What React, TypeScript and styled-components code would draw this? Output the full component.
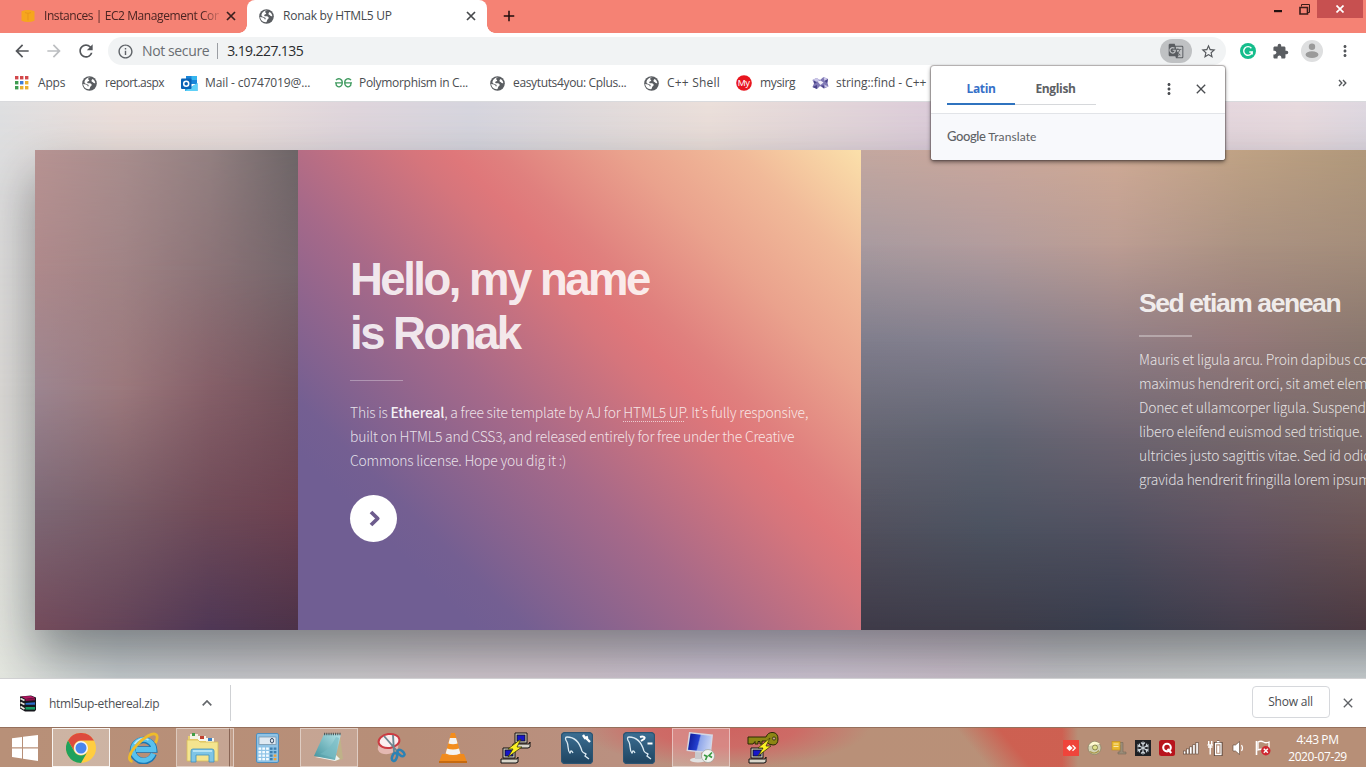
import React from "react";
import styled, { createGlobalStyle } from "styled-components";
import {
  MdAdd,
  MdArrowBack,
  MdArrowForward,
  MdClose,
  MdExtension,
  MdGTranslate,
  MdInfoOutline,
  MdMoreVert,
  MdRefresh,
  MdStarBorder,
} from "react-icons/md";

const ui = `"Open Sans", "Noto Sans", sans-serif`;
const copy = `"Noto Sans CJK KR", "Open Sans", sans-serif`;

const GlobalStyle = createGlobalStyle`
  * { box-sizing: border-box; }
  html, body { margin: 0; padding: 0; overflow: hidden; }
  h1, h2, p { margin: 0; }
  svg { display: block; flex: none; }
`;

const Screen = styled.div`
  position: relative;
  display: flex;
  flex-direction: column;
  width: 1366px;
  height: 767px;
  overflow: hidden;
  background: #fff;
  font-family: ${ui};
`;

/* ---------- Browser title bar ---------- */

const TitleBar = styled.header`
  display: flex;
  height: 33px;
  background: #f58274;
`;

const Tab = styled.div<{ $active?: boolean; $width: number; $pad: number }>`
  position: relative;
  display: flex;
  align-items: center;
  width: ${(p) => p.$width}px;
  height: 33px;
  padding: 0 10px 1px ${(p) => p.$pad}px;
  background: ${(p) => (p.$active ? "#fff" : "transparent")};
  border-radius: 8px 8px 0 0;
  ${(p) =>
    p.$active &&
    `
    &::before, &::after {
      content: "";
      position: absolute;
      bottom: 0;
      width: 8px;
      height: 8px;
    }
    &::before { left: -8px; background: radial-gradient(circle at 0 0, transparent 7.5px, #fff 8px); }
    &::after { right: -8px; background: radial-gradient(circle at 100% 0, transparent 7.5px, #fff 8px); }
  `}
`;

const TabTitle = styled.span<{ $fade?: boolean; $spacing: number }>`
  flex: 1;
  margin: 0 6px 0 ${(p) => (p.$fade ? 8 : 9)}px;
  overflow: hidden;
  white-space: nowrap;
  font-size: 12px;
  line-height: 18px;
  letter-spacing: ${(p) => p.$spacing}px;
  color: ${(p) => (p.$fade ? "#4a2422" : "#45494d")};
  ${(p) => p.$fade && "mask-image: linear-gradient(90deg, #000 90%, transparent 102%);"}
`;

const NewTab = styled.div`
  display: flex;
  align-items: center;
  padding: 0 0 1px 13px;
`;

const WindowButtons = styled.div`
  display: flex;
  margin-left: auto;
  padding-right: 3px;
`;

const WindowButton = styled.div<{ $width: number; $close?: boolean }>`
  display: flex;
  align-items: center;
  justify-content: center;
  width: ${(p) => p.$width}px;
  height: 18px;
  background: ${(p) => (p.$close ? "#c75050" : "transparent")};
`;

/* ---------- Toolbar ---------- */

const Toolbar = styled.div`
  display: flex;
  align-items: center;
  height: 35px;
  padding: 1px 12px 0 12px;
`;

const NavIcon = styled.span`
  display: flex;
  width: 32px;
`;

const AddressBar = styled.div`
  display: flex;
  align-items: center;
  width: 1118px;
  height: 28px;
  padding: 0 9px 0 9px;
  border-radius: 14px;
  background: #f1f3f4;
`;

const AddressText = styled.span<{ $muted?: boolean; $spacing: number }>`
  font-size: 14px;
  line-height: 20px;
  letter-spacing: ${(p) => p.$spacing}px;
  color: ${(p) => (p.$muted ? "#6a6e73" : "#292b2e")};
  margin-left: ${(p) => (p.$muted ? 8 : 9)}px;
`;

const AddressDivider = styled.i`
  width: 1px;
  height: 16px;
  margin-left: 8px;
  background: #9b9ea3;
`;

const TranslatePill = styled.span`
  display: flex;
  align-items: center;
  justify-content: center;
  width: 32px;
  height: 24px;
  margin-left: auto;
  margin-right: 8px;
  border-radius: 12px;
  background: #bfc1c3;
`;

const ToolbarIcons = styled.div`
  display: flex;
  align-items: center;
  margin-left: 14px;
  gap: 12.5px;

  > :first-child {
    margin-right: 3px;
  }
`;

/* ---------- Bookmarks ---------- */

const Bookmarks = styled.nav`
  display: flex;
  align-items: center;
  height: 34px;
  padding: 0 14px 3px 14px;
  border-bottom: 1px solid #d9dadd;
`;

const Bookmark = styled.span<{ $width: number; $gap: number; $spacing: number }>`
  display: flex;
  align-items: center;
  gap: ${(p) => p.$gap}px;
  flex: none;
  width: ${(p) => p.$width}px;
  font-size: 12px;
  line-height: 18px;
  letter-spacing: ${(p) => p.$spacing}px;
  color: #4a4d51;
  white-space: nowrap;
`;

const Overflow = styled.span`
  margin-left: auto;
  margin-right: 5px;
`;

/* ---------- Translate popup ---------- */

const Popup = styled.aside`
  position: absolute;
  left: 931px;
  top: 66px;
  z-index: 5;
  width: 294px;
  height: 94px;
  border-radius: 3px;
  overflow: hidden;
  background: #fff;
  box-shadow: 0 0 1px 1px rgba(70, 60, 60, 0.38), 0 2px 4px rgba(0, 0, 0, 0.5);
`;

const PopupTop = styled.div`
  display: flex;
  height: 48px;
  padding: 0 16px;
  border-bottom: 1px solid #e2e4e8;
`;

const Lang = styled.span<{ $active?: boolean; $width: number }>`
  width: ${(p) => p.$width}px;
  height: 39px;
  padding-top: 14px;
  text-align: center;
  font-size: 12px;
  font-weight: 700;
  line-height: 18px;
  letter-spacing: -0.35px;
  color: ${(p) => (p.$active ? "#3670c8" : "#5d6064")};
  border-bottom: ${(p) => (p.$active ? "2px solid #2f73bf" : "1px solid #d6d8db")};
`;

const PopupActions = styled.span`
  display: flex;
  align-items: center;
  gap: 15px;
  margin-left: auto;
  padding-bottom: 2px;
`;

const PopupFooter = styled.div`
  height: 46px;
  padding: 13px 16px;
  background: #f8f9fc;
  font-family: Lato, ${ui};
  font-size: 12px;
  line-height: 18px;
  color: #5f6266;
  letter-spacing: 0.1px;
`;

const GoogleWord = styled.span`
  font-size: 13px;
  font-weight: 500;
  letter-spacing: -0.4px;
`;

/* ---------- Soft colour meshes ---------- */

const MeshStack = styled.div`
  display: grid;
  grid-area: 1 / 1;
  isolation: isolate;
  overflow: hidden;
`;

const MeshLayer = styled.i<{ $colors: string[]; $from: number; $to: number }>`
  grid-area: 1 / 1;
  background: linear-gradient(90deg, ${(p) => p.$colors.join(", ")});
  ${(p) =>
    p.$to > 0 &&
    `mask-image: linear-gradient(180deg, transparent ${p.$from}%, #000 ${p.$to}%);`}
`;

function Mesh({ rows }: { rows: string[][] }) {
  const step = 100 / (rows.length - 1);
  return (
    <MeshStack>
      {rows.map((colors, i) => (
        <MeshLayer key={i} $colors={colors} $from={(i - 1) * step} $to={i * step} />
      ))}
    </MeshStack>
  );
}

const pageMesh = [
  ["#dedfe1", "#ebdeda", "#e9dddb", "#dfd5dc", "#d6d5de", "#e0dadb", "#ebdfda", "#e3d6d9", "#dbcbd9", "#dccfdb", "#e4d5dd", "#e8dade", "#d6d5e1", "#d3d4e2"],
  ["#dddbd8", "#dedcda", "#dad8d8", "#d8d6d8", "#d6d6dc", "#d8d6da", "#dcd6d6", "#d8d0d6", "#d4ccd6", "#d2ccd6", "#d4d0d8", "#d4d0d8", "#d0d0d8", "#d0d2da"],
  ["#e3e6df", "#c8ced1", "#cbcbcf", "#cfcccf", "#d2c8cf", "#d2c6d0", "#cfc5d6", "#d0c6d4", "#cec2ce", "#c6c6ca", "#c8cacb", "#cbd0d2", "#cbd1d3", "#ced4d5"],
];

const leftMesh = [
  ["#b79392", "#a88d8d", "#938081", "#6d6567"],
  ["#ae898b", "#a08385", "#8b7377", "#74656a"],
  ["#9c8590", "#9b787c", "#855f68", "#70505a"],
  ["#7d6875", "#795c67", "#704b58", "#6c4150"],
  ["#744b5b", "#634358", "#4f3755", "#4c3248"],
];

const rightMesh = [
  ["#c4a8a0", "#caa79c", "#cfaa95", "#bfa284", "#b0987b"],
  ["#a89a9f", "#b29c9d", "#bc9d93", "#ab9282", "#a48d7a"],
  ["#7f7d8c", "#837f8e", "#917f87", "#94797a", "#89776e"],
  ["#646572", "#5f6371", "#6c6471", "#75676b", "#7b6b6a"],
  ["#504f5c", "#4b515f", "#4f4f5f", "#60505f", "#695253"],
  ["#3e3a48", "#3d3b48", "#373c4c", "#433d4b", "#4b3840"],
];

/* ---------- Web page ---------- */

const Page = styled.main`
  display: grid;
  height: 577px;
  overflow: hidden;
  border-bottom: 1px solid #d0d0d2;
`;

const PageContent = styled.div`
  grid-area: 1 / 1;
  z-index: 1;
  padding: 48px 0 0 35px;
`;

const Strip = styled.section`
  display: flex;
  width: 1500px;
  height: 480px;
  box-shadow: 0 24px 48px rgba(8, 14, 20, 0.42);
`;

const Panel = styled.article<{ $width: number }>`
  display: grid;
  flex: none;
  width: ${(p) => p.$width}px;
  height: 480px;
  overflow: hidden;
`;

const IntroPanel = styled(Panel)`
  background: linear-gradient(
    45deg,
    #705e93 0%,
    #705e93 17%,
    #745f92 22%,
    #a66989 41%,
    #d5757c 56.5%,
    #df777a 60.5%,
    #e0807e 65%,
    #eaa28d 77%,
    #f1ba99 88%,
    #fbe0aa 100%
  );
`;

const PanelBody = styled.div<{ $top: number; $left: number }>`
  grid-area: 1 / 1;
  z-index: 1;
  padding: ${(p) => p.$top}px 0 0 ${(p) => p.$left}px;
`;

const Title = styled.h1`
  font-family: "Liberation Sans", Arial, sans-serif;
  font-size: 45.5px;
  line-height: 54px;
  letter-spacing: -2.5px;
  color: rgba(255, 255, 255, 0.87);
`;

const SubTitle = styled.h2`
  font-family: "Liberation Sans", Arial, sans-serif;
  font-size: 26.5px;
  line-height: 32px;
  letter-spacing: -1.42px;
  white-space: nowrap;
  color: rgba(255, 255, 255, 0.87);
`;

const Rule = styled.div<{ $thick: number; $before: number; $after: number }>`
  width: 53px;
  height: ${(p) => p.$thick}px;
  margin: ${(p) => p.$before}px 0 ${(p) => p.$after}px;
  background: rgba(255, 255, 255, 0.32);
`;

const Copy = styled.p`
  font-family: ${copy};
  font-size: 13.9px;
  font-weight: 300;
  line-height: 24px;
  letter-spacing: -0.2px;
  white-space: nowrap;
  color: rgba(255, 255, 255, 0.82);

  b {
    font-weight: 500;
    color: rgba(255, 255, 255, 0.92);
  }
`;

const DottedLink = styled.a`
  background: linear-gradient(90deg, rgba(255, 255, 255, 0.65) 50%, transparent 50%) 0 100% / 2px 1px repeat-x;
`;

const RoundButton = styled.div`
  display: flex;
  align-items: center;
  justify-content: center;
  width: 47px;
  height: 47px;
  margin-top: 23px;
  padding-left: 3px;
  border-radius: 50%;
  background: #fff;
`;

/* ---------- Downloads shelf ---------- */

const Shelf = styled.div`
  display: flex;
  align-items: center;
  height: 48px;
  padding: 0 10px 0 19px;
  background: #fff;
`;

const ShelfItem = styled.div`
  display: flex;
  align-items: center;
  width: 212px;
  height: 36px;
  border-right: 1px solid #cfd1d4;
`;

const FileName = styled.span`
  width: 153px;
  margin-left: 12px;
  padding-top: 2px;
  font-size: 12px;
  line-height: 18px;
  letter-spacing: -0.33px;
  color: #4d5054;
`;

const ShowAll = styled.div`
  width: 78px;
  height: 32px;
  margin: -2px 10px 0 auto;
  padding-right: 1px;
  border: 1px solid #d6d8dc;
  border-radius: 4px;
  text-align: center;
  font-size: 12px;
  font-weight: 500;
  line-height: 30px;
  letter-spacing: -0.2px;
  color: #4a4d51;
`;

/* ---------- Taskbar ---------- */

const Taskbar = styled.footer`
  display: flex;
  height: 40px;
  border-top: 1px solid #95705c;
  background:
    radial-gradient(ellipse 145px 42px at 725px -2px, rgba(207, 96, 94, 0.95) 0%, rgba(209, 100, 98, 0.85) 50%, rgba(209, 98, 98, 0) 100%),
    linear-gradient(90deg, transparent 1062px, #b78f77 1078px),
    linear-gradient(50deg, transparent 757px, rgba(207, 92, 78, 0.92) 790px),
    linear-gradient(90deg, #b89078 0%, #b78e78 30%, #ba9080 45%, #b99078 62%, #b89178 100%);
`;

const TaskItems = styled.div`
  display: flex;
  gap: 4px;
`;

const StartButton = styled.div`
  display: flex;
  align-items: center;
  justify-content: center;
  width: 48px;
  height: 39px;
`;

const TaskItem = styled.div<{ $state?: "active" | "open" | "stacked" }>`
  display: flex;
  align-items: center;
  justify-content: center;
  width: 58px;
  height: 39px;
  padding-right: ${(p) => (p.$state === "stacked" ? 5 : 0)}px;
  border: 1px solid
    ${(p) =>
      p.$state === "active" ? "rgba(255,255,255,.85)" : p.$state ? "rgba(255,255,255,.45)" : "transparent"};
  background: ${(p) =>
    p.$state === "active"
      ? "rgba(225,215,205,.5)"
      : p.$state === "stacked"
        ? "linear-gradient(90deg, rgba(255,255,255,.2) 52px, rgba(90,60,50,.5) 52px, rgba(90,60,50,.5) 53px, rgba(255,255,255,.35) 53px, rgba(255,255,255,.12) 54px)"
        : p.$state
          ? "rgba(255,255,255,.2)"
          : "none"};
`;

const Tray = styled.div`
  display: flex;
  align-items: center;
  gap: 8px;
  margin-left: auto;
  padding: 1px 18px 0 0;
`;

const Clock = styled.div`
  width: 61px;
  margin: -1px 0 0 8px;
  text-align: center;
  font-size: 12px;
  line-height: 17px;
  letter-spacing: -0.4px;
  color: #fff;
  white-space: nowrap;
`;

/* ---------- Icons ---------- */

const GlobeIcon = () => (
  <svg width="15" height="15" viewBox="0 0 15 15">
    <circle cx="7.500" cy="7.500" r="7.300" fill="#5a5d61" />
    <path
      d="M8.600 1.500c-1.500.2-2.700.8-2.400 1.800.2.700 1 .5 1 1.300 0 1-1.500.7-1.900 1.400-.4.800.4 1.300 1.400 1.300 1.500 0 2.800.2 3 1.500.1 1.300-1.200 1.500-1.600 2.500-.3.900-.2 1.900-1.200 1.900-3.500-.1-5.600-2.600-5.700-5.500 1.300.7 2.500.6 3.400 1.100 1 .6 1.200 1.300 1.400 2 .5-.5.800-1 .5-1.700-.3-.7-1.200-.7-2-1.100-1.200-.6-2.400-1.100-2-2.600C3 3.300 5.500 1 8.600 1.500z"
      fill="#fff"
    />
    <path d="M10.600 3c1.600.9 2.600 2.400 2.700 4.200-1 .3-1.700-.1-2.200-.6-.7-.8-1.800-.9-1.600-2.100.1-.6.500-1.200 1.100-1.500z" fill="#fff" />
  </svg>
);

const Ec2Icon = () => (
  <svg width="16" height="16" viewBox="0 0 16 16">
    <path d="M1.500 3.200Q8 .8 14.500 3.200v9.600Q8 15.200 1.500 12.800z" fill="#f6a61d" />
    <path d="M5 4.600l3 .8 3-.8M8 5.400v7" stroke="#e9951b" fill="none" />
  </svg>
);

const AppsIcon = () => {
  const colors = ["#d2484b", "#d2484b", "#d2484b", "#3e9c50", "#3c7dd9", "#e9b030", "#3e9c50", "#e9b030", "#e9b030"];
  return (
    <svg width="15" height="14" viewBox="0 0 15 14">
      {colors.map((c, i) => (
        <rect key={i} x={1 + (i % 3) * 5} y={Math.floor(i / 3) * 5} width="3.400" height="3.400" fill={c} />
      ))}
    </svg>
  );
};

const OutlookIcon = () => (
  <svg width="17" height="17" viewBox="0 0 17 17">
    <path d="M5 1h11v8H5z" fill="#1a86d9" />
    <path d="M10.500 1H16v4h-5.500z" fill="#35b5ee" />
    <path d="M4 8l6 4 6.500-4v8H4z" fill="#28a8ea" />
    <path d="M4 16l12.500-8v8z" fill="#5fd0f7" />
    <rect x="0" y="3.500" width="10.500" height="10.500" rx="1" fill="#0a63b5" />
    <circle cx="5.200" cy="8.700" r="2.500" fill="none" stroke="#fff" strokeWidth="1.500" />
  </svg>
);

const GeeksIcon = () => (
  <svg width="17" height="10" viewBox="0 0 17 10" fill="none" stroke="#3f9a5f" strokeWidth="1.300">
    <path d="M1 2.200C3-.4 7.300.6 7.300 4.800S3 10 1.200 7.200V4.900M0 4.900h7.300" />
    <path d="M16 2.200C14-.4 9.700.6 9.700 4.800S14 10 15.800 7.200V4.900M9.700 4.900H17" />
  </svg>
);

const MyIcon = () => (
  <svg width="16" height="16" viewBox="0 0 16 16">
    <circle cx="8" cy="8" r="7.800" fill="#e8161f" />
    <text x="7.800" y="11" textAnchor="middle" fontSize="9.500" letterSpacing="-.3" fill="#fff" fontFamily="Liberation Sans, sans-serif">
      My
    </text>
  </svg>
);

const CppIcon = () => (
  <svg width="17" height="14" viewBox="0 0 17 14">
    <path d="M.5 4l4-2 3.500 2 3.500-3 4.500 2-.5 4 1 3.500-4.500 2-4-2.500-3 3L.5 11 2 7.500z" fill="#8079b5" />
    <path d="M.5 4l4-2 3.500 2-3 1.800zM11.500 1L16 3l-3.500 2zM12 8.500l4.500 2-4 1z" fill="#cbc7e8" />
    <path d="M5.500 5.500l3-1 3 2-3 2.500z" fill="#f1effa" />
    <path d="M.5 11l4.500-2v4zM9 9.500l3 3 .5-3zM12.500 5l2.500 2 1-4zM2 7.500l3-.5-3-2.500z" fill="#4b448b" />
  </svg>
);

const GrammarlyIcon = () => (
  <svg width="16" height="16" viewBox="0 0 16 16">
    <circle cx="8" cy="8" r="8" fill="#15bd8c" />
    <path d="M11.400 5.300A4.300 4.300 0 1 0 12.200 9H9.300M12.200 9v2.600" fill="none" stroke="#fff" strokeWidth="1.400" />
  </svg>
);

const AvatarIcon = () => (
  <svg width="22" height="22" viewBox="0 0 22 22">
    <circle cx="11" cy="11" r="11" fill="#dedfe0" />
    <circle cx="11" cy="6.700" r="3.200" fill="#9a9a9a" />
    <ellipse cx="11" cy="14.700" rx="6.400" ry="3.400" fill="#9a9a9a" />
  </svg>
);

const MinimizeIcon = () => (
  <svg width="8" height="18" viewBox="0 0 8 18">
    <rect y="10" width="8" height="2.200" fill="#221110" />
  </svg>
);

const RestoreIcon = () => (
  <svg width="11" height="11" viewBox="0 0 11 11" fill="none" stroke="#3a1c19">
    <path d="M2.500 2.500V.5h8v8h-2" />
    <path d="M1 3.500h7.500V10H1z" strokeWidth="1.600" />
  </svg>
);

const CloseWindowIcon = () => (
  <svg width="8" height="8" viewBox="0 0 8 8" stroke="#fff" strokeWidth="1.700">
    <path d="M.5.5l7 7M7.500.5l-7 7" />
  </svg>
);

const TabCloseIcon = ({ color }: { color: string }) => (
  <svg width="12" height="12" viewBox="0 0 12 12" stroke={color} strokeWidth="1.700">
    <path d="M2 2l8 8M10 2l-8 8" />
  </svg>
);

const ChevronsIcon = () => (
  <svg width="9" height="8" viewBox="0 0 9 8" fill="none" stroke="#55585c" strokeWidth="1.400">
    <path d="M1 1l2.800 3L1 7M5 1l2.800 3L5 7" />
  </svg>
);

const NextIcon = () => (
  <svg width="12" height="17" viewBox="0 0 12 17" fill="none" stroke="#6d5c8d" strokeWidth="3.800" strokeLinejoin="round">
    <path d="M2 2l6.700 6.500L2 15" />
  </svg>
);

const RarIcon = () => (
  <svg width="18" height="17" viewBox="0 0 18 17">
    <path d="M1 1.500L12 .5l5 2V15l-1.500 1.500H6l-5-3z" fill="#16161c" />
    <path d="M2 1.500L12 1l4 1.800L6.500 4z" fill="#b21761" />
    <path d="M6.500 4L16 3v2.200l-9.500.8z" fill="#8a0f4a" />
    <path d="M6.500 8L16 7.200v2.600H6.500z" fill="#2a6cc8" />
    <path d="M6.500 12H16v2.600H6.500z" fill="#179b62" />
    <path d="M1.500 3.500l4 2M1.500 7.500l4 2M1.500 11.500l4 2.500" stroke="#e7e5dc" strokeWidth="1.800" />
  </svg>
);

const ShelfCaret = () => (
  <svg width="10" height="6" viewBox="0 0 10 6" fill="none" stroke="#63666a" strokeWidth="1.700">
    <path d="M.7 5.300L5 1l4.300 4.300" />
  </svg>
);

const WindowsIcon = () => (
  <svg width="28" height="26" viewBox="0 0 28 26" fill="#fff">
    <path d="M2 3.300l10-1.300v10.300H2zM13 1.800L28.500 0v12.300H13zM2 13.400h10v10L2 22zM13 13.400h15.500V26L13 23.800z" />
  </svg>
);

const ChromeIcon = () => (
  <svg width="30" height="30" viewBox="0 0 30 30">
    <circle cx="15" cy="15" r="15" fill="#ffcd40" />
    <path d="M2 7.500A15 15 0 0 1 28 7.500H15a7.500 7.500 0 0 0-6.500 11z" fill="#dd4b3e" />
    <path d="M2 7.500A15 15 0 0 0 15 30l6.500-11.200a7.500 7.500 0 0 1-13 0z" fill="#1fa15d" />
    <circle cx="15" cy="15" r="7" fill="#f4f4f4" />
    <circle cx="15" cy="15" r="5.500" fill="#4a86ee" />
  </svg>
);

const IeIcon = () => (
  <svg width="32" height="32" viewBox="0 0 32 32" fill="none">
    <path d="M26.500 22A10.500 10.500 0 1 1 27 17.500H9" stroke="#1a76b2" strokeWidth="6.600" />
    <path d="M26.300 21.700A10.500 10.500 0 1 1 27 17.500H9" stroke="#58c1ee" strokeWidth="4.800" />
    <path d="M7.500 12c3-5 9-7 14-4" stroke="#bfe9fa" strokeWidth="1.500" />
    <path d="M5.500 29.500c-5.500-.5-3-9 3.500-15.500C17 5 26.500-.5 29.500 3c1.500 2 .5 5-1 8" stroke="#eebb2b" strokeWidth="2.800" />
  </svg>
);

const FolderIcon = () => (
  <svg width="34" height="31" viewBox="0 0 34 31">
    <path d="M2 4h9l2 2h8v20H2z" fill="#e9cf6e" />
    <rect x="4" y="2" width="8" height="5" fill="#f3f3e4" />
    <rect x="6" y="1" width="3" height="3" fill="#3f9e45" />
    <rect x="12" y="4" width="8" height="5" fill="#f7f7ef" />
    <rect x="14" y="4" width="4" height="3" fill="#c2402e" />
    <rect x="20" y="6" width="8" height="5" fill="#f7f7ef" />
    <rect x="22" y="6" width="4" height="3" fill="#3d7fc4" />
    <path d="M1 8h11l2 2h18v19H1z" fill="#f4e48f" stroke="#d8bd58" strokeWidth=".8" />
    <path d="M5 30V19q0-2 2-2h19q2 0 2 2v11h-5v-7H10v7z" fill="#7ec5e6" stroke="#3f91bd" strokeWidth=".8" />
    <path d="M7 19h19" stroke="#c9ecf9" strokeWidth="1.500" />
  </svg>
);

const CalcIcon = () => (
  <svg width="23" height="30" viewBox="0 0 23 30">
    <rect x=".5" y=".5" width="22" height="29" rx="1.500" fill="#8fc3e6" stroke="#4f8fbe" />
    <rect x="3" y="4" width="17" height="7.500" fill="#dfe9f2" stroke="#6e8ca3" strokeWidth=".7" />
    <ellipse cx="16" cy="7.700" rx="1.600" ry="2.300" fill="none" stroke="#364a63" />
    {[0, 1, 2, 3].map((r) =>
      [0, 1, 2, 3, 4].map((c) => (
        <rect
          key={`${r}-${c}`}
          x={2.500 + c * 3.800}
          y={14.500 + r * 3.500}
          width="2.700"
          height="2.300"
          fill={c === 4 && r > 1 ? "#eda13a" : c > 2 ? "#3e7fae" : "#f3fbff"}
        />
      )),
    )}
  </svg>
);

const NotepadIcon = () => (
  <svg width="30" height="31" viewBox="0 0 30 31">
    <defs>
      <linearGradient id="pad" x1="0" y1="1" x2="1" y2="0">
        <stop offset="0" stopColor="#3f919c" />
        <stop offset="1" stopColor="#b6e4e8" />
      </linearGradient>
    </defs>
    <path d="M26 3l3 24-7 2z" fill="#bfb289" />
    <path d="M1 25l20 4 5-2-4-4z" fill="#eef2ee" />
    <path d="M10 2h17l-6 26L0 24z" fill="url(#pad)" />
    <path d="M10 2h17" stroke="#4f5a5c" strokeWidth="2.500" strokeDasharray="1.200 1" />
    <path d="M6 22c8-4 12-9 16-17l3 1-4 20z" fill="#76bac3" opacity=".6" />
  </svg>
);

const SnipIcon = () => (
  <svg width="31" height="31" viewBox="0 0 31 31" fill="none">
    <ellipse cx="12" cy="15" rx="10.500" ry="7" fill="#e4b8b2" transform="rotate(-12 12 15)" />
    <ellipse cx="13" cy="9" rx="10.500" ry="7" fill="#fbeff0" stroke="#cc3b42" strokeWidth="2" transform="rotate(-8 13 9)" />
    <path d="M8 4l13 15M17 3l1 17" stroke="#6d8791" strokeWidth="1.900" />
    <ellipse cx="18.500" cy="25" rx="2.300" ry="4" stroke="#2c82b4" strokeWidth="2.500" transform="rotate(20 18.500 25)" />
    <ellipse cx="25" cy="21" rx="2.300" ry="4" stroke="#2c82b4" strokeWidth="2.500" transform="rotate(-50 25 21)" />
  </svg>
);

const VlcIcon = () => (
  <svg width="28" height="31" viewBox="0 0 28 31">
    <path d="M3 22h22l3 8H0z" fill="#f08a1c" />
    <path d="M0 29h28v2H0z" fill="#c66a10" />
    <path d="M12 1h4l6 22q-8 4-16 0z" fill="#f38d1d" />
    <path d="M10.900 6h6.200l1.500 5.500q-4.600 1.500-9.200 0zM8 16.500q6 2 12 0l1.400 5q-7.400 3-14.800 0z" fill="#f4f3f1" />
  </svg>
);

const computer = (x: number, y: number) => (
  <g transform={`translate(${x} ${y})`}>
    <path d="M3 1h12v10H3zM1 12h16l1-2v5l-2 1H1z" fill="#d9d5c9" stroke="#111" />
    <rect x="5" y="3" width="8" height="6" fill="#1616c8" stroke="#111" strokeWidth=".8" />
  </g>
);

const PuttyIcon = () => (
  <svg width="32" height="32" viewBox="0 0 32 32">
    {computer(13, 0)}
    {computer(1, 15)}
    <path d="M22 7L9 17h5l-5 8 14-10h-5z" fill="#fbf024" stroke="#3a3a08" strokeWidth=".8" />
  </svg>
);

const PuttyGenIcon = () => (
  <svg width="32" height="32" viewBox="0 0 32 32">
    <path d="M1 5h18q2-5 7-4.500T31 7t-5 6-7-4h-4v3h-2V9.500h-2V12H8V9.500L6 12H1z" fill="#8d8614" stroke="#2a2805" />
    <circle cx="27" cy="6.500" r="1.600" fill="#c5a48f" stroke="#2a2805" strokeWidth=".8" />
    {computer(1, 15)}
    <path d="M23 6L11 16h5l-5 8 13-10h-5z" fill="#fbf024" stroke="#3a3a08" strokeWidth=".8" />
  </svg>
);

const MySqlIcon = ({ dash }: { dash?: boolean }) => (
  <svg width="32" height="32" viewBox="0 0 32 32" fill="none" stroke="#dcebf3" strokeWidth="1.300">
    <defs>
      <linearGradient id="sql" x1="0" y1="0" x2="0" y2="1">
        <stop offset="0" stopColor="#3c6f94" />
        <stop offset="1" stopColor="#1f4460" />
      </linearGradient>
    </defs>
    <rect x=".5" y=".5" width="31" height="31" rx="3.500" fill="url(#sql)" stroke="#2c5472" />
    <path d="M12 21c-1-2-1-2-2-2l-1 2c-3-3-1-7-3-11-2-3-2-5 0-5 9 0 13 7 15 14 1 2 2 2 4 3l-1 2 4 3" />
    {dash ? (
      <path d="M17 5c3-1 6 0 4 2l-3 2M24.500 11.500h5" stroke="#fff" strokeWidth="2" />
    ) : (
      <path d="M22 3l2 3 3-1M25 6l4 4" stroke="#fff" strokeWidth="2.400" />
    )}
  </svg>
);

const RemoteIcon = () => (
  <svg width="31" height="31" viewBox="0 0 31 31">
    <defs>
      <linearGradient id="rdp" x1="0" y1="0" x2="1" y2=".2">
        <stop offset="0" stopColor="#0a1490" />
        <stop offset=".5" stopColor="#2440d0" />
        <stop offset=".56" stopColor="#8fa6ea" />
        <stop offset="1" stopColor="#c2cff2" />
      </linearGradient>
    </defs>
    <ellipse cx="12" cy="28" rx="8" ry="2.500" fill="#e2e2e2" />
    <path d="M9 20h6v7H9z" fill="#c9c9cc" />
    <path d="M3 0l24 2.500-2 19L.5 19z" fill="#d5d8e4" />
    <path d="M4.500 1.500L25.500 4 24 20 2 17.800z" fill="url(#rdp)" />
    <circle cx="22" cy="24" r="6.500" fill="#f2f4f0" stroke="#9aa09a" strokeWidth=".7" />
    <path d="M18 23l3 1.500-1.500 3.500M26 20.500l-3 3 3 2" fill="none" stroke="#3a9a43" strokeWidth="1.700" />
  </svg>
);

const AnyDeskIcon = () => (
  <svg width="16" height="16" viewBox="0 0 16 16">
    <rect width="16" height="16" fill="#ef443b" />
    <path d="M6.500 4.900L9.600 8l-3.100 3.100L3.400 8z" fill="#fff" />
    <path d="M9.500 5.200L12.300 8l-2.800 2.800" fill="none" stroke="#fff" strokeWidth="1.300" />
  </svg>
);

const DiscIcon = () => (
  <svg width="16" height="16" viewBox="0 0 16 16">
    <circle cx="7.500" cy="8" r="6.500" fill="#d3d2b4" stroke="#8b8767" strokeWidth=".8" />
    <path d="M2 6a6.500 6.500 0 0 1 11-2z" fill="#fff9cf" />
    <circle cx="8" cy="7.500" r="2.500" fill="#dfe28c" stroke="#75733c" strokeWidth=".8" />
    <path d="M3 11.500q5 3.500 9-1" stroke="#a9984a" strokeWidth="1.200" fill="none" />
  </svg>
);

const UsbIcon = () => (
  <svg width="16" height="16" viewBox="0 0 16 16">
    <path d="M8 2.500h4v9.500h3v2H7v-2h2V5H8z" fill="#9a8c78" stroke="#6e6353" strokeWidth=".5" />
    <rect x="1" y="1.500" width="8" height="8.500" fill="#eab92f" stroke="#c08f1c" strokeWidth=".6" />
    <path d="M2.500 4h5M2.500 6.500h5" stroke="#fbe9a7" />
  </svg>
);

const SnowIcon = () => (
  <svg width="16" height="16" viewBox="0 0 16 16">
    <rect width="16" height="16" fill="#1d2024" />
    <g stroke="#c9d2d8" strokeWidth="1.100" fill="none">
      {[0, 60, 120, 180, 240, 300].map((a) => (
        <path key={a} d="M8 8V1.500M6 2.500l2 2 2-2" transform={`rotate(${a} 8 8)`} />
      ))}
    </g>
  </svg>
);

const QuickIcon = () => (
  <svg width="16" height="16" viewBox="0 0 16 16">
    <rect width="16" height="16" rx="2.500" fill="#b8141c" />
    <circle cx="8" cy="7.600" r="3.800" fill="none" stroke="#fff" strokeWidth="2.100" />
    <path d="M8.500 9l3.800 4" stroke="#fff" strokeWidth="2" />
  </svg>
);

const SignalIcon = () => (
  <svg width="16" height="16" viewBox="0 0 16 16" fill="#fff" stroke="#5b4438" strokeWidth=".6">
    {[0, 1, 2, 3, 4].map((i) => (
      <rect key={i} x={0.500 + i * 3.100} y={11 - i * 2.100} width="2.300" height={3 + i * 2.100} />
    ))}
  </svg>
);

const BatteryIcon = () => (
  <svg width="16" height="16" viewBox="0 0 16 16" fill="none">
    <path d="M8 3h6.500v12H8zM10 1.700h2.500" stroke="#5b4438" strokeWidth="2.200" />
    <path d="M8.500 3.500h5.500v11H8.500zM10 1.700h2.500" stroke="#fff" strokeWidth="1.300" />
    <path d="M10.200 5.500h2.200v7.300h-2.200z" fill="#fff" />
    <path d="M1.700 1v4M4.700 1v4M.5 5h5.400M3.200 5v9.500M1 7h4.400" stroke="#fff" strokeWidth="1.400" />
  </svg>
);

const SoundIcon = () => (
  <svg width="16" height="16" viewBox="0 0 16 16">
    <path d="M2 5h2.500L8.500 1.500v13L4.500 11H2z" fill="#fff" stroke="#5b4438" strokeWidth=".6" />
    <path d="M10.500 5q2 3 0 6" stroke="#fff" strokeWidth="1.200" fill="none" />
  </svg>
);

const FlagIcon = () => (
  <svg width="16" height="16" viewBox="0 0 16 16">
    <path d="M1.500 1v14" stroke="#fff" strokeWidth="1.600" />
    <path d="M3 2q3-1.500 5.500 0t5.500 0v8q-3 1.500-5.500 0T3 10z" fill="none" stroke="#fff" strokeWidth="1.300" />
    <circle cx="10.800" cy="10.800" r="4.700" fill="#cf2831" />
    <path d="M8.800 8.800l4 4M12.800 8.800l-4 4" stroke="#fff" strokeWidth="1.400" />
  </svg>
);

/* ---------- Data ---------- */

const bookmarks = [
  { label: "Apps", icon: <AppsIcon />, width: 68, gap: 9, spacing: -0.2 },
  { label: "report.aspx", icon: <GlobeIcon />, width: 99, gap: 8, spacing: -0.5 },
  { label: "Mail - c0747019@...", icon: <OutlookIcon />, width: 154, gap: 7, spacing: -0.12 },
  { label: "Polymorphism in C...", icon: <GeeksIcon />, width: 155, gap: 7, spacing: -0.3 },
  { label: "easytuts4you: Cplus...", icon: <GlobeIcon />, width: 154, gap: 8, spacing: -0.35 },
  { label: "C++ Shell", icon: <GlobeIcon />, width: 92, gap: 8, spacing: 0.2 },
  { label: "mysirg", icon: <MyIcon />, width: 76, gap: 8, spacing: -0.35 },
  { label: "string::find - C++", icon: <CppIcon />, width: 120, gap: 7, spacing: -0.05 },
];

export default function App() {
  return (
    <Screen>
      <GlobalStyle />
      <TitleBar>
        <Tab $width={247} $pad={20}>
          <Ec2Icon />
          <TabTitle $fade $spacing={-0.42}>
            Instances | EC2 Management Con
          </TabTitle>
          <TabCloseIcon color="#3a1f1e" />
        </Tab>
        <Tab $active $width={240} $pad={12}>
          <GlobeIcon />
          <TabTitle $spacing={-0.25}>Ronak by HTML5 UP</TabTitle>
          <TabCloseIcon color="#47494c" />
        </Tab>
        <NewTab>
          <MdAdd size={18} color="#1e0d0b" />
        </NewTab>
        <WindowButtons>
          <WindowButton $width={26}>
            <MinimizeIcon />
          </WindowButton>
          <WindowButton $width={26}>
            <RestoreIcon />
          </WindowButton>
          <WindowButton $width={46} $close>
            <CloseWindowIcon />
          </WindowButton>
        </WindowButtons>
      </TitleBar>

      <Toolbar>
        <NavIcon>
          <MdArrowBack size={20} color="#54575b" />
        </NavIcon>
        <NavIcon>
          <MdArrowForward size={20} color="#bcbec1" />
        </NavIcon>
        <NavIcon>
          <MdRefresh size={20} color="#54575b" />
        </NavIcon>
        <AddressBar>
          <MdInfoOutline size={17} color="#5f6368" />
          <AddressText $muted $spacing={-0.38}>
            Not secure
          </AddressText>
          <AddressDivider />
          <AddressText $spacing={-0.6}>3.19.227.135</AddressText>
          <TranslatePill>
            <MdGTranslate size={16} color="#5a5d61" />
          </TranslatePill>
          <MdStarBorder size={17} color="#55585c" />
        </AddressBar>
        <ToolbarIcons>
          <GrammarlyIcon />
          <MdExtension size={17} color="#5a5d61" />
          <AvatarIcon />
          <MdMoreVert size={18} color="#55585c" />
        </ToolbarIcons>
      </Toolbar>

      <Bookmarks>
        {bookmarks.map((b) => (
          <Bookmark key={b.label} $width={b.width} $gap={b.gap} $spacing={b.spacing}>
            {b.icon}
            {b.label}
          </Bookmark>
        ))}
        <Overflow>
          <ChevronsIcon />
        </Overflow>
      </Bookmarks>

      <Page>
        <Mesh rows={pageMesh} />
        <PageContent>
          <Strip>
            <Panel $width={263}>
              <Mesh rows={leftMesh} />
            </Panel>
            <IntroPanel $width={563}>
              <PanelBody $top={103} $left={52}>
                <Title>
                  Hello, my name
                  <br />
                  is Ronak
                </Title>
                <Rule $thick={1} $before={19} $after={19} />
                <Copy>
                  This is <b>Ethereal</b>, a free site template by AJ for <DottedLink>HTML5 UP</DottedLink>. It’s fully
                  responsive,
                  <br />
                  built on HTML5 and CSS3, and released entirely for free under the Creative
                  <br />
                  Commons license. Hope you dig it :)
                </Copy>
                <RoundButton>
                  <NextIcon />
                </RoundButton>
              </PanelBody>
            </IntroPanel>
            <Panel $width={505}>
              <Mesh rows={rightMesh} />
              <PanelBody $top={137} $left={278}>
                <SubTitle>Sed etiam aenean</SubTitle>
                <Rule $thick={2} $before={16} $after={10} />
                <Copy>
                  Mauris et ligula arcu. Proin dapibus co
                  <br />
                  maximus hendrerit orci, sit amet elem
                  <br />
                  Donec et ullamcorper ligula. Suspend
                  <br />
                  libero eleifend euismod sed tristique.
                  <br />
                  ultricies justo sagittis vitae. Sed id odio
                  <br />
                  gravida hendrerit fringilla lorem ipsum
                </Copy>
              </PanelBody>
            </Panel>
          </Strip>
        </PageContent>
      </Page>

      <Shelf>
        <ShelfItem>
          <RarIcon />
          <FileName>html5up-ethereal.zip</FileName>
          <ShelfCaret />
        </ShelfItem>
        <ShowAll>Show all</ShowAll>
        <MdClose size={16} color="#5f6266" />
      </Shelf>

      <Taskbar>
        <TaskItems>
          <StartButton>
            <WindowsIcon />
          </StartButton>
          <TaskItem $state="active">
            <ChromeIcon />
          </TaskItem>
          <TaskItem>
            <IeIcon />
          </TaskItem>
          <TaskItem $state="stacked">
            <FolderIcon />
          </TaskItem>
          <TaskItem>
            <CalcIcon />
          </TaskItem>
          <TaskItem $state="open">
            <NotepadIcon />
          </TaskItem>
          <TaskItem>
            <SnipIcon />
          </TaskItem>
          <TaskItem>
            <VlcIcon />
          </TaskItem>
          <TaskItem>
            <PuttyIcon />
          </TaskItem>
          <TaskItem>
            <MySqlIcon />
          </TaskItem>
          <TaskItem>
            <MySqlIcon dash />
          </TaskItem>
          <TaskItem $state="open">
            <RemoteIcon />
          </TaskItem>
          <TaskItem>
            <PuttyGenIcon />
          </TaskItem>
        </TaskItems>
        <Tray>
          <AnyDeskIcon />
          <DiscIcon />
          <UsbIcon />
          <SnowIcon />
          <QuickIcon />
          <SignalIcon />
          <BatteryIcon />
          <SoundIcon />
          <FlagIcon />
          <Clock>
            4:43 PM
            <br />
            2020-07-29
          </Clock>
        </Tray>
      </Taskbar>

      <Popup>
        <PopupTop>
          <Lang $active $width={68}>
            Latin
          </Lang>
          <Lang $width={81}>English</Lang>
          <PopupActions>
            <MdMoreVert size={18} color="#4a4d51" />
            <MdClose size={16} color="#4a4d51" />
          </PopupActions>
        </PopupTop>
        <PopupFooter>
          <GoogleWord>Google</GoogleWord> Translate
        </PopupFooter>
      </Popup>
    </Screen>
  );
}
